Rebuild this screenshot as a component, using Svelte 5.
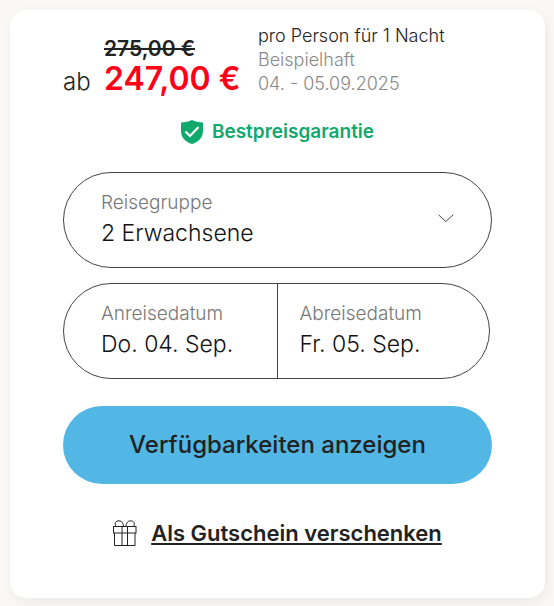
<script>
	let group = $state('2 Erwachsene');

	const dates = [
		{ id: 'arrival', label: 'Anreisedatum', value: 'Do. 04. Sep.' },
		{ id: 'departure', label: 'Abreisedatum', value: 'Fr. 05. Sep.' },
	];
</script>

<main class="card">
	<div class="offer">
		<span class="from">ab</span>
		<div class="prices">
			<del>275,00 €</del>
			<strong>247,00 €</strong>
		</div>
		<div class="info">
			<div class="per">pro Person für 1 Nacht</div>
			<div>Beispielhaft</div>
			<div>04. - 05.09.2025</div>
		</div>
	</div>

	<div class="guarantee">
		<svg width="22" height="24" viewBox="0 0 22 24" aria-hidden="true">
			<path d="M11 0 C8 1.500 4 2.500 0 2.500 V11 C0 17.500 4.500 22 11 24 C17.500 22 22 17.500 22 11 V2.500 C18 2.500 14 1.500 11 0Z" fill="#0fa96d" />
			<path d="M4.500 11.500 L9 16 L17.500 7" fill="none" stroke="#fff" stroke-width="2.200" />
		</svg>
		<span>Bestpreisgarantie</span>
	</div>

	<label class="group">
		<span class="field">
			<span class="caption">Reisegruppe</span>
			<select bind:value={group}>
				<option>2 Erwachsene</option>
			</select>
		</span>
		<svg width="16" height="11" viewBox="0 0 16 11" aria-hidden="true">
			<path d="M0.500 0.800 L7.800 7.500 L15.200 0.800" fill="none" stroke="#333" stroke-width="0.900" />
		</svg>
	</label>

	<div class="dates">
		{#each dates as date (date.id)}
			<button type="button" class="date">
				<span class="caption">{date.label}</span>
				<span class="value">{date.value}</span>
			</button>
		{/each}
	</div>

	<button type="button" class="submit">Verfügbarkeiten anzeigen</button>

	<div class="voucher">
		<svg width="24" height="27" viewBox="0 0 24 27" fill="none" stroke="#222" stroke-width="1" aria-hidden="true">
			<rect x="0.500" y="6.500" width="22.500" height="6.500" />
			<path d="M1.500 13 V25.500 H22 V13 M9 6.500 V25.500 M14.500 6.500 V25.500" />
			<path d="M3 6.500 C1 3 3 0.800 6 0.800 C9 0.800 10.500 3.500 10.500 6.500 M13 6.500 C13 3.500 14.500 0.800 17.500 0.800 C20.500 0.800 22.500 3 20.500 6.500" />
		</svg>
		<a href="#gutschein">Als Gutschein verschenken</a>
	</div>
</main>

<style>
	:global(body) {
		margin: 0;
		background: #f9f8f6;
	}

	.card {
		box-sizing: border-box;
		margin: 10px 9px 8px 10px;
		padding: 14px 53px 49px;
		border-radius: 16px;
		background: #fff;
		box-shadow: 2px 4px 12px rgba(0, 0, 0, 0.06);
		color: #222;
		font-family: Inter, "Liberation Sans", sans-serif;
		font-weight: 300;
	}

	.offer {
		display: grid;
		grid-template-columns: 41px 154px 1fr;
		align-items: last baseline;
		white-space: nowrap;
	}
	.from {
		font-size: 24px;
	}
	.prices {
		display: flex;
		flex-direction: column;
		align-items: flex-start;
		font-weight: 600;
	}
	del {
		font-size: 21px;
		line-height: 24px;
		text-decoration-thickness: 2px;
	}
	strong {
		font-size: 32px;
		line-height: 36px;
		font-weight: 600;
		color: #ff0019;
	}
	.info {
		font-size: 18px;
		line-height: 24px;
		color: #888;
	}
	.per {
		color: #222;
	}

	.guarantee {
		display: flex;
		justify-content: center;
		align-items: center;
		gap: 9px;
		margin-top: 23px;
		font-size: 19px;
		line-height: 24px;
		font-weight: 600;
		color: #0fa96d;
	}

	.group {
		box-sizing: border-box;
		display: flex;
		align-items: center;
		justify-content: space-between;
		height: 96px;
		margin-top: 28px;
		padding: 0 37px 2px;
		border: 1px solid #444;
		border-radius: 48px;
	}
	.field {
		display: flex;
		flex-direction: column;
		flex: 1;
	}
	.caption {
		font-size: 19px;
		line-height: 28px;
		color: #777;
	}
	select,
	.value {
		font-size: 23px;
		line-height: 32px;
		color: #111;
	}
	select {
		appearance: none;
		padding: 0;
		border: 0;
		background: none;
		font-family: inherit;
		font-weight: 300;
	}

	.dates {
		display: grid;
		grid-template-columns: 1fr 1fr;
		margin: 15px 2px 0 0;
		border: 1px solid #444;
		border-radius: 48px;
	}
	.date {
		display: flex;
		flex-direction: column;
		justify-content: center;
		height: 94px;
		padding: 0 0 2px 37px;
		border: 0;
		background: none;
		font-family: inherit;
		font-weight: 300;
		text-align: left;
	}
	.date + .date {
		padding-left: 22px;
		border-left: 1px solid #444;
	}

	.submit {
		display: block;
		width: 100%;
		height: 78px;
		margin-top: 27px;
		padding: 0 0 2px;
		border: 0;
		border-radius: 39px;
		background: #52b7e4;
		color: #222;
		font-family: inherit;
		font-size: 24px;
		font-weight: 500;
	}

	.voucher {
		display: flex;
		justify-content: center;
		align-items: center;
		gap: 14px;
		margin-top: 33px;
	}
	a {
		color: #222;
		font-size: 22px;
		line-height: 32px;
		font-weight: 600;
		text-decoration-thickness: 2px;
		text-underline-offset: 2px;
		text-decoration-skip-ink: none;
	}
</style>
